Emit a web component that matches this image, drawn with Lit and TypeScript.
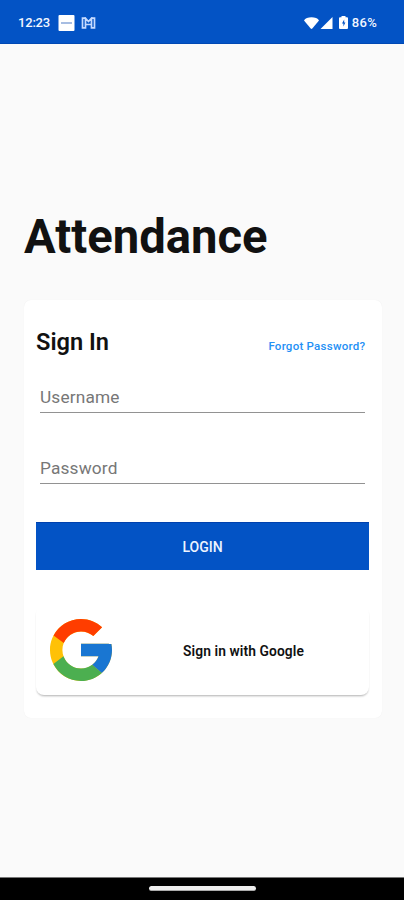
import { LitElement, html, css } from "lit";
import { customElement } from "lit/decorators.js";

@customElement("app-root")
export class AppRoot extends LitElement {
  static styles = css`
    :host {
      display: flex;
      flex-direction: column;
      height: 900px;
      width: 404px;
      background: #fafafa;
      font-family: Roboto, sans-serif;
      color: #111;
      overflow: hidden;
    }
    * { box-sizing: border-box; }
    .status {
      height: 44px;
      flex: none;
      background: #0353c5;
      border-bottom: 1px solid #0048b4;
      color: #f2f6ff;
      display: flex;
      align-items: center;
      padding: 2px 27px 0 18px;
      font-size: 13px;
      font-weight: 500;
      line-height: 16px;
    }
    .status svg { display: block; flex: none; }
    .clock { width: 40px; letter-spacing: -0.2px; white-space: nowrap; }
    .level { letter-spacing: 0.3px; }
    .spacer { flex: 1; }
    .note { margin-right: 6px; }
    .wifi { margin-right: 1px; }
    .signal { margin-right: 6px; }
    .battery { margin-right: 4px; }
    main { flex: 1; padding: 162px 22px 0 24px; }
    h1 {
      margin: 0 0 34px;
      height: 60px;
      font-size: 47.2px;
      line-height: 62px;
      font-weight: 700;
      white-space: nowrap;
    }
    .card {
      height: 418px;
      background: #fff;
      border-radius: 7px;
      padding: 28px 13px 0 12px;
      box-shadow: 0 0 1px rgba(0, 0, 0, 0.07);
    }
    .head {
      display: flex;
      justify-content: space-between;
      align-items: baseline;
      height: 28px;
      padding-right: 4px;
    }
    h2 { margin: 0; font-size: 23.6px; line-height: 29px; font-weight: 600; white-space: nowrap; }
    .forgot { font-size: 11.5px; font-weight: 500; letter-spacing: 0.25px; margin-right: -0.25px; color: #2490f5; white-space: nowrap; }
    .field {
      margin: 28px 4px 0;
      height: 29px;
      border-bottom: 1px solid #929292;
      font-size: 17.3px;
      letter-spacing: 0.15px;
      line-height: 26px;
      color: #777;
    }
    .field + .field { margin-top: 42px; }
    .login {
      display: flex;
      align-items: center;
      justify-content: center;
      margin-top: 38px;
      height: 48px;
      background: #0353c5;
      border-top: 1px solid #0041ae;
      color: #eef4ff;
      font-size: 14px;
      font-weight: 500;
    }
    .google {
      display: flex;
      align-items: center;
      height: 89px;
      margin-top: 36px;
      padding: 0 0 1px 14px;
      border-radius: 8px;
      background: #fff;
      box-shadow: 0 2px 2px -1px rgba(0, 0, 0, 0.24), 0 2px 2px rgba(0, 0, 0, 0.05);
    }
    .google svg { flex: none; }
    .label { margin-left: 71px; padding-top: 1px; font-size: 13.8px; letter-spacing: 0.1px; font-weight: 600; white-space: nowrap; }
    .nav {
      height: 23px;
      flex: none;
      background: #000;
      border-top: 1px solid #777;
      display: flex;
      justify-content: center;
      padding-top: 8px;
    }
    .pill { width: 107px; height: 5px; border-radius: 3px; background: #eee; border: 1px solid #aaa; border-width: 0 0 1px; }
  `;

  render() {
    return html`
      <div class="status">
        <span class="clock">12:23</span>
        <svg class="note" width="17" height="16" viewBox="0 0 17 16">
          <rect x="0.5" width="16" height="16" rx="1" fill="#fff" />
          <path d="M3 8h11" stroke="#8aa7d9" stroke-width="1.5" />
        </svg>
        <svg width="15" height="12" viewBox="0 0 15 12" fill="none" stroke="#c5daff" stroke-width="1.7">
          <path d="M4.500 1.200H1.500v9.600h3V1.200L7.500 4.500l3-3.300v9.600h3V1.200h-3M5 7.500h5" />
        </svg>
        <span class="spacer"></span>
        <svg class="wifi" width="15" height="12" viewBox="0 0 15 12">
          <path d="M0 3.600C2-.8 13-.8 15 3.600L8.300 11.500q-.8.800-1.600 0z" fill="#fff" />
        </svg>
        <svg class="signal" width="13" height="12" viewBox="0 0 13 12">
          <path d="M12.500 0v12H.5z" fill="#fff" />
        </svg>
        <svg class="battery" width="9" height="13" viewBox="0 0 9 13">
          <path d="M2.500 0h4v1.300H8q1 0 1 1V12q0 1-1 1H1q-1 0-1-1V2.300q0-1 1-1h1.500z" fill="#fff" />
          <path d="M5.200 3.500 3 7.500h1.400v3l2-4H5.200z" fill="#0353c5" />
        </svg>
        <span class="level">86%</span>
      </div>
      <main>
        <h1>Attendance</h1>
        <section class="card">
          <div class="head">
            <h2>Sign In</h2>
            <span class="forgot">Forgot Password?</span>
          </div>
          <div class="field">Username</div>
          <div class="field">Password</div>
          <div class="login">LOGIN</div>
          <div class="google">
            <svg width="62" height="62" viewBox="4 4 40 40">
              <path fill="#FFC107" d="M43.611 20.083H42V20H24v8h11.303c-1.649 4.657-6.080 8-11.303 8-6.627 0-12-5.373-12-12s5.373-12 12-12c3.059 0 5.842 1.154 7.961 3.039l5.657-5.657C34.046 6.053 29.268 4 24 4 12.955 4 4 12.955 4 24s8.955 20 20 20 20-8.955 20-20c0-1.341-.138-2.650-.389-3.917z" />
              <path fill="#FF3D00" d="M6.306 14.691l6.571 4.819C14.655 15.108 18.961 12 24 12c3.059 0 5.842 1.154 7.961 3.039l5.657-5.657C34.046 6.053 29.268 4 24 4 16.318 4 9.656 8.337 6.306 14.691z" />
              <path fill="#4CAF50" d="M24 44c5.166 0 9.860-1.977 13.409-5.192l-6.190-5.238C29.211 35.091 26.715 36 24 36c-5.202 0-9.619-3.317-11.283-7.946l-6.522 5.025C9.505 39.556 16.227 44 24 44z" />
              <path fill="#1976D2" d="M43.611 20.083H42V20H24v8h11.303c-.792 2.237-2.231 4.166-4.087 5.571l.003-.002 6.190 5.238C36.971 39.205 44 34 44 24c0-1.341-.138-2.650-.389-3.917z" />
            </svg>
            <span class="label">Sign in with Google</span>
          </div>
        </section>
      </main>
      <div class="nav"><div class="pill"></div></div>
    `;
  }
}
